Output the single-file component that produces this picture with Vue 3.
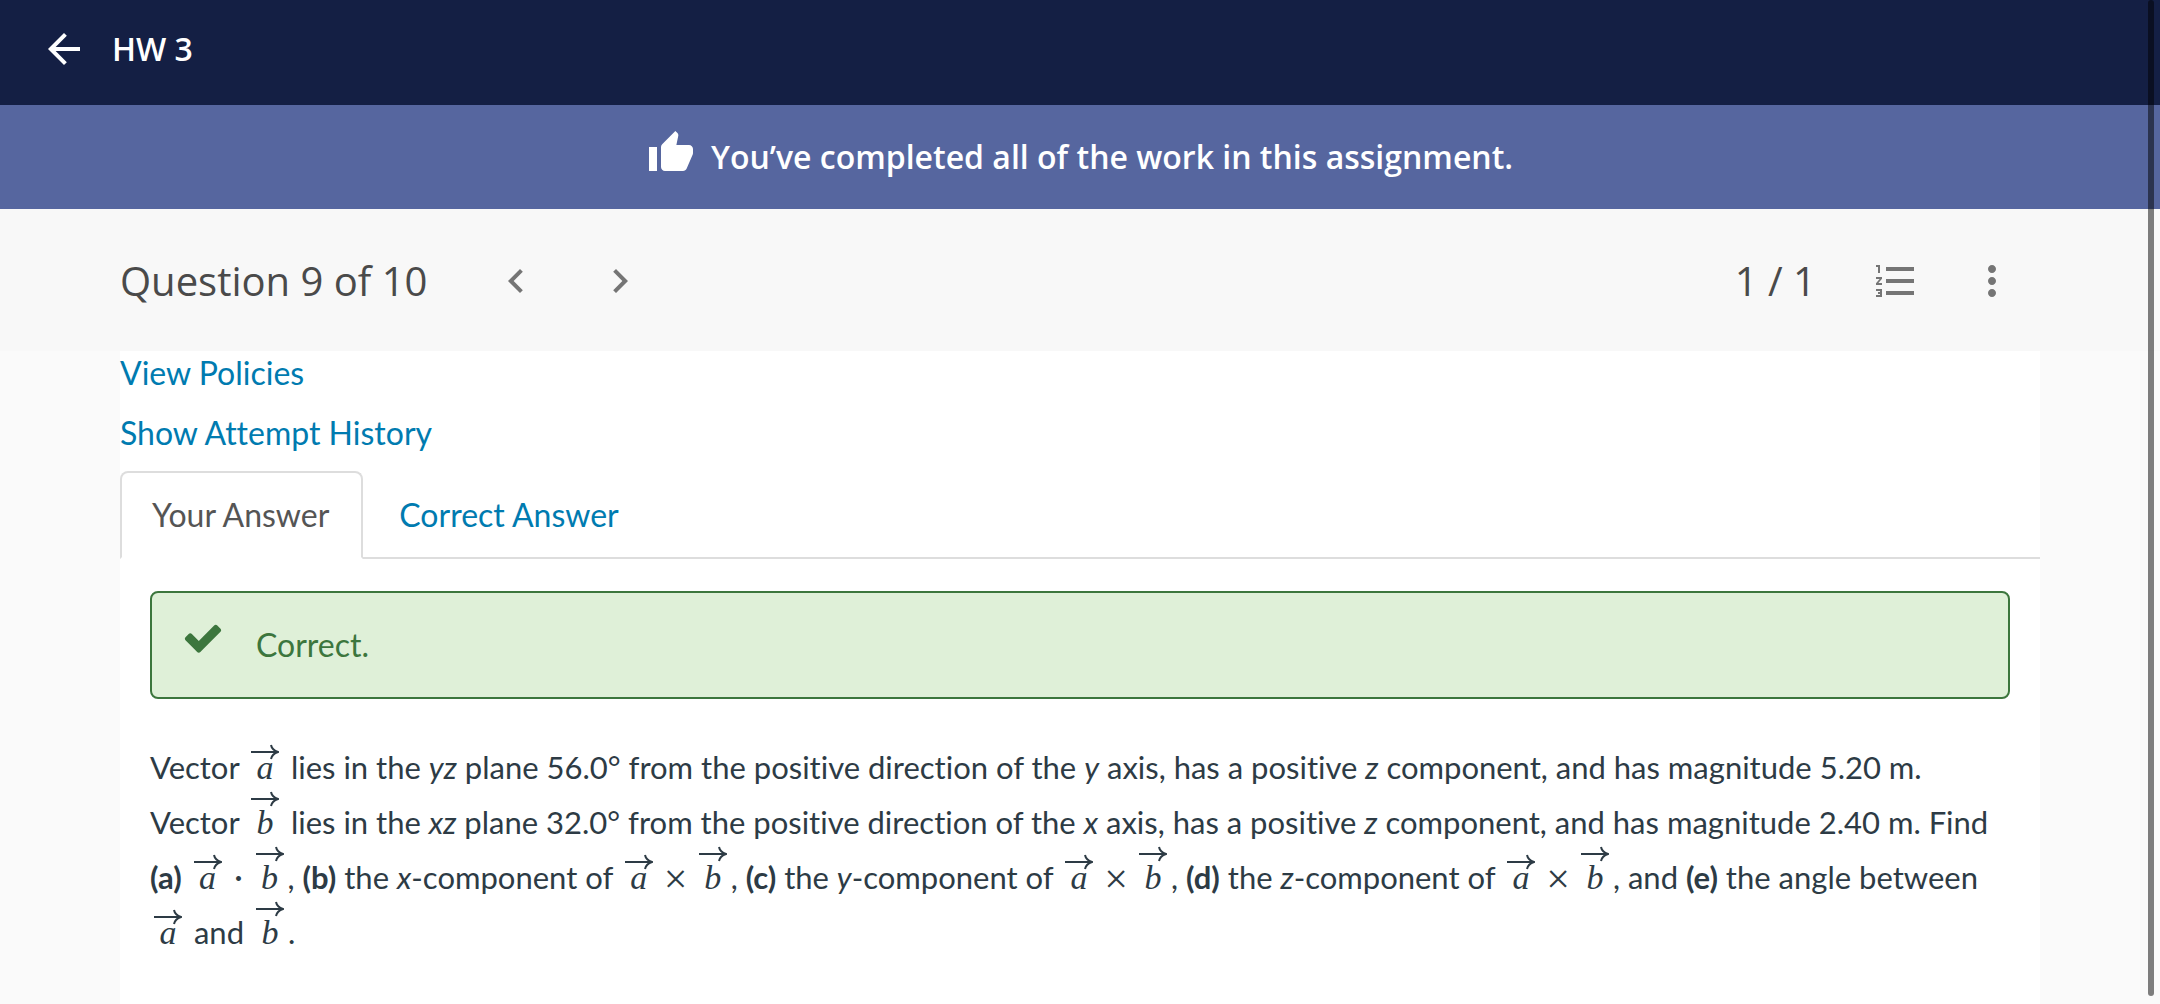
<template>
  <div class="page">
    <header class="top-bar">
      <button class="icon-btn" type="button" aria-label="Back">
        <svg class="icon" viewBox="0 0 24 24"><path d="M20 11H7.83l5.59-5.59L12 4l-8 8 8 8 1.41-1.41L7.83 13H20v-2z" /></svg>
      </button>
      <h1 class="title">HW 3</h1>
    </header>

    <div class="banner">
      <svg class="icon banner-icon" viewBox="0 0 24 24"><path d="M1 21h4V9H1v12zm22-11c0-1.1-.9-2-2-2h-6.31l.95-4.57.03-.32c0-.41-.17-.79-.44-1.06L14.17 1 7.59 7.59C7.22 7.95 7 8.45 7 9v10c0 1.1.9 2 2 2h9c.83 0 1.54-.5 1.84-1.22l3.02-7.05c.09-.23.14-.47.14-.73v-2z" /></svg>
      <span>You’ve completed all of the work in this assignment.</span>
    </div>

    <nav class="question-bar">
      <h2 class="question">Question 9 of 10</h2>
      <div class="pager">
        <button class="icon-btn" type="button" aria-label="Previous question">
          <svg class="icon" viewBox="0 0 24 24"><path d="M15.41 7.41 14 6l-6 6 6 6 1.41-1.41L10.83 12z" /></svg>
        </button>
        <button class="icon-btn" type="button" aria-label="Next question">
          <svg class="icon" viewBox="0 0 24 24"><path d="M10 6 8.59 7.41 13.17 12l-4.58 4.59L10 18l6-6z" /></svg>
        </button>
      </div>
      <div class="tools">
        <span class="score">1 / 1</span>
        <button class="icon-btn" type="button" aria-label="Question list">
          <svg class="icon" viewBox="0 0 24 24"><path d="M2 17h2v.5H3v1h1v.5H2v1h3v-4H2v1zm1-9h1V4H2v1h1v3zm-1 3h1.8L2 13.1v.9h3v-1H3.2L5 10.9V10H2v1zm5-6v2h14V5H7zm0 14h14v-2H7v2zm0-6h14v-2H7v2z" /></svg>
        </button>
        <button class="icon-btn" type="button" aria-label="More options">
          <svg class="icon" viewBox="0 0 24 24"><path d="M12 8c1.1 0 2-.9 2-2s-.9-2-2-2-2 .9-2 2 .9 2 2 2zm0 2c-1.1 0-2 .9-2 2s.9 2 2 2 2-.9 2-2-.9-2-2-2zm0 6c-1.1 0-2 .9-2 2s.9 2 2 2 2-.9 2-2-.9-2-2-2z" /></svg>
        </button>
      </div>
    </nav>

    <main class="content">
      <div class="links">
        <a href="#policies">View Policies</a>
        <a href="#history">Show Attempt History</a>
      </div>

      <div class="tabs" role="tablist">
        <button
          v-for="tab in tabs"
          :key="tab"
          class="tab"
          :class="{ active: tab === activeTab }"
          type="button"
          role="tab"
          :aria-selected="tab === activeTab"
          @click="activeTab = tab"
        >{{ tab }}</button>
      </div>

      <section class="panel">
        <div class="alert">
          <svg class="check" viewBox="0 0 1792 1792"><path d="M1671 566q0 40-28 68l-724 724-136 136q-28 28-68 28t-68-28l-136-136-362-362q-28-28-28-68t28-68l136-136q28-28 68-28t68 28l294 295 656-657q28-28 68-28t68 28l136 136q28 28 28 68z" /></svg>
          <span>Correct.</span>
        </div>

        <p class="problem">
          <template v-for="(part, i) in problem" :key="i">
            <span v-if="part.vec" class="vec" :class="{ tall: part.vec === 'b' }">{{ part.vec }}<svg class="vec-arrow" viewBox="0 0 28 16"><path d="M0 8H26M20 1Q21 6 27 8Q21 10 20 15" /></svg></span>
            <span v-else-if="part.op" class="op" :class="{ wide: part.op === '×' }">{{ part.op }}</span>
            <em v-else-if="part.em">{{ part.em }}</em>
            <strong v-else-if="part.bold">{{ part.bold }}</strong>
            <template v-else>{{ part.text }}</template>
          </template>
        </p>
      </section>
    </main>

    <div class="scroll-thumb"></div>
  </div>
</template>

<script setup>
import { ref } from 'vue';

const tabs = ['Your Answer', 'Correct Answer'];
const activeTab = ref('Your Answer');

const text = (value) => ({ text: value });
const em = (value) => ({ em: value });
const bold = (value) => ({ bold: value });
const vec = (value) => ({ vec: value });
const op = (value) => ({ op: value });

const problem = [
  text('Vector '), vec('a'), text(' lies in the '), em('yz'),
  text(' plane 56.0° from the positive direction of the '), em('y'),
  text(' axis, has a positive '), em('z'),
  text(' component, and has magnitude 5.20 m. '),
  text('Vector '), vec('b'), text(' lies in the '), em('xz'),
  text(' plane 32.0° from the positive direction of the '), em('x'),
  text(' axis, has a positive '), em('z'),
  text(' component, and has magnitude 2.40 m. Find '),
  bold('(a)'), text(' '), vec('a'), op('·'), vec('b'), text(', '),
  bold('(b)'), text(' the '), em('x'), text('-component of '), vec('a'), op('×'), vec('b'), text(', '),
  bold('(c)'), text(' the '), em('y'), text('-component of '), vec('a'), op('×'), vec('b'), text(', '),
  bold('(d)'), text(' the '), em('z'), text('-component of '), vec('a'), op('×'), vec('b'), text(', and '),
  bold('(e)'), text(' the angle between '), vec('a'), text(' and '), vec('b'), text('.')
];
</script>

<style>
body {
  background: #fafafa;
}
</style>

<style scoped>
.page {
  display: flex;
  flex-direction: column;
  min-height: 100vh;
  font-family: Lato, sans-serif;
  font-size: 32px;
  font-variant-ligatures: none;
  color: #2d3b45;
}
h1, h2, p {
  margin: 0;
}
.icon {
  display: block;
  width: 48px;
  height: 48px;
  fill: currentColor;
}
.icon-btn {
  padding: 0;
  border: 0;
  background: none;
  color: inherit;
  cursor: pointer;
}
.top-bar {
  display: flex;
  align-items: center;
  gap: 24px;
  height: 97px;
  padding: 0 40px 8px;
  background: #141f44;
  color: #fff;
  font-family: "Open Sans", sans-serif;
}
.title {
  font-size: 32px;
  font-weight: 600;
}
.banner {
  display: flex;
  align-items: center;
  justify-content: center;
  gap: 16px;
  height: 102px;
  padding-bottom: 2px;
  background: #56669f;
  color: #fff;
  font-family: "Open Sans", sans-serif;
  font-weight: 600;
}
.banner-icon {
  margin-bottom: 6px;
}
.question-bar {
  display: flex;
  align-items: center;
  height: 140px;
  padding: 2px 120px 0;
  background: #f8f8f8;
  color: #757575;
  font-family: "Open Sans", sans-serif;
}
.question,
.score {
  padding-bottom: 2px;
  color: #4a4a4a;
  font-size: 40px;
  font-weight: 400;
}
.pager {
  display: flex;
  gap: 56px;
  margin-left: 65px;
}
.tools {
  display: flex;
  align-items: center;
  gap: 48px;
  margin-left: auto;
  padding-right: 24px;
}
.score {
  margin-right: 8px;
}
.content {
  flex: 1;
  margin: 0 120px;
  background: #fff;
}
.links {
  display: flex;
  flex-direction: column;
  align-items: flex-start;
  gap: 20px;
  padding-top: 2px;
  line-height: 40px;
}
.links a {
  color: #007bb0;
  text-decoration: none;
}
.tabs {
  display: flex;
  gap: 4px;
  margin-top: 18px;
  border-bottom: 2px solid #ddd;
}
.tab {
  height: 88px;
  margin-bottom: -2px;
  padding: 0 32px 2px 30px;
  border: 2px solid transparent;
  border-radius: 8px 8px 0 0;
  background: none;
  color: #007bb0;
  font: inherit;
  font-variant-ligatures: none;
  cursor: pointer;
}
.tab.active {
  border-color: #ddd #ddd #fff;
  background: #fff;
  color: #555;
}
.panel {
  padding: 32px 30px;
}
.alert {
  display: flex;
  align-items: center;
  gap: 32px;
  height: 102px;
  padding: 0 30px 2px;
  border: 2px solid #3c763d;
  border-radius: 8px;
  background: #dff0d8;
  color: #3c763d;
}
.check {
  width: 42px;
  height: 42px;
  margin-bottom: 12px;
  fill: currentColor;
}
.problem {
  margin-top: 41px;
  font-size: 31px;
  line-height: 55px;
}
.vec {
  position: relative;
  display: inline-block;
  width: 28px;
  margin: 0 4px;
  font-family: "Liberation Serif", serif;
  font-size: 34px;
  font-style: italic;
  line-height: 40px;
  text-align: center;
}
/* the arrow sits over the letter, higher above an ascender */
.vec-arrow {
  position: absolute;
  top: -4px;
  left: 0;
  width: 28px;
  height: 16px;
  fill: none;
  stroke: currentColor;
  stroke-width: 2;
}
.vec.tall .vec-arrow {
  top: -12px;
}
.op {
  display: inline-block;
  width: 26px;
  font-family: "Liberation Serif", serif;
  font-size: 42px;
  line-height: 40px;
  text-align: center;
  vertical-align: -4px;
}
.op.wide {
  width: 38px;
}
.scroll-thumb {
  position: fixed;
  top: 0;
  right: 6px;
  bottom: 8px;
  width: 6px;
  border-radius: 3px;
  background: rgba(0, 0, 0, 0.5);
}
</style>
